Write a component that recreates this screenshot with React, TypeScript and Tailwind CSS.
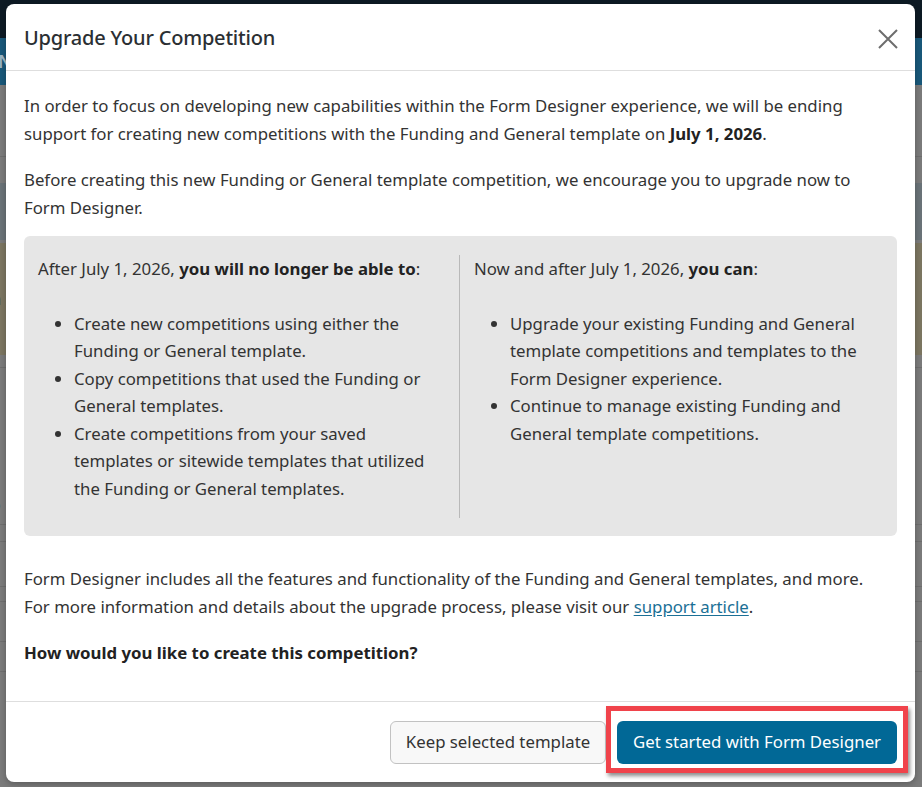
import React from "react";

export default function App() {
  return (
    <div
      className="relative w-[922px] h-[787px] overflow-hidden bg-[#7b7b7b] text-[#333333]"
      style={{ fontFamily: '"Noto Sans", "Open Sans", Arial, sans-serif' }}
    >
      {/* dimmed page underneath */}
      <div className="flex flex-col">
        <div className="h-[38px] bg-[#0d1a24]" />
        <div className="h-[47px] bg-[#19587a] flex items-center">
          <span className="text-[#9fb6c4] text-[17px] font-semibold ml-[-8px]">INS</span>
        </div>
        <div className="h-[72px] border-b border-[#6e6e6e]" />
        <div className="h-[26px]" />
        <div className="h-[57px] bg-[#6a7378]" />
        <div className="h-[3px]" />
        <div className="h-[112px] bg-[#7c7661] flex items-center">
          <span className="text-[#4a4535] text-[17px] ml-[-8px]">a</span>
        </div>
        <div className="h-[13px] border-b border-[#6e6e6e]" />
        <div className="h-[90px]" />
        <div className="h-[20px] flex items-center">
          <span className="text-[#1c1c1c] text-[17px] font-bold ml-[-10px]">r</span>
        </div>
        <div className="h-[17px]" />
        <div className="h-[20px] flex items-center">
          <span className="text-[#1c1c1c] text-[17px] font-bold ml-[-10px]">o</span>
        </div>
        <div className="h-[10px] border-b border-[#6e6e6e]" />
        <div className="h-[17px] border-b border-[#6e6e6e]" />
        <div className="h-[45px] border-b border-[#6e6e6e]" />
        <div className="h-[15px] border-b border-[#6e6e6e]" />
        <div className="h-[40px] border-b border-[#6e6e6e]" />
        <div className="h-[30px] border-b border-[#6e6e6e]" />
      </div>

      {/* modal */}
      <div className="absolute left-[6px] top-[4px] w-[909px] h-[778px] bg-white rounded-[8px] shadow-[0_2px_6px_rgba(0,0,0,0.25)] flex flex-col">
        <div className="h-[67px] flex items-center justify-between pl-[18px] pr-[16px] border-b border-[#dedede] shrink-0">
          <h2 className="text-[20px] font-medium text-[#2b2f33] tracking-[-0.2px] mt-[1px]">
            Upgrade Your Competition
          </h2>
          <svg width="22" height="22" viewBox="0 0 22 22" className="mt-[3px]">
            <path d="M2 2 L20 20 M20 2 L2 20" stroke="#6d6d6d" strokeWidth="2" fill="none" />
          </svg>
        </div>

        <div className="flex-1 pl-[18px] pr-[18px] pt-[21px] text-[16.8px] leading-[27.5px]">
          <p className="whitespace-nowrap">
            In order to focus on developing new capabilities within the Form Designer experience, we will be ending
            <br />
            support for creating new competitions with the Funding and General template on{" "}
            <b className="font-bold text-[#222]">July 1, 2026</b>.
          </p>
          <p className="mt-[19px] whitespace-nowrap">
            Before creating this new Funding or General template competition, we encourage you to upgrade now to
            <br />
            Form Designer.
          </p>

          <div className="mt-[15px] h-[300px] bg-[#e6e6e6] rounded-[6px] flex pt-[19px] pb-[18px]">
            <div className="w-[436px] pl-[14px] border-r border-[#b9b9b9]">
              <p className="whitespace-nowrap">
                After July 1, 2026, <b className="font-bold text-[#222]">you will no longer be able to</b>:
              </p>
              <ul className="mt-[27px] pl-[36px] list-disc whitespace-nowrap">
                <li>
                  Create new competitions using either the
                  <br />
                  Funding or General template.
                </li>
                <li>
                  Copy competitions that used the Funding or
                  <br />
                  General templates.
                </li>
                <li>
                  Create competitions from your saved
                  <br />
                  templates or sitewide templates that utilized
                  <br />
                  the Funding or General templates.
                </li>
              </ul>
            </div>
            <div className="flex-1 pl-[14px]">
              <p className="whitespace-nowrap">
                Now and after July 1, 2026, <b className="font-bold text-[#222]">you can</b>:
              </p>
              <ul className="mt-[27px] pl-[36px] list-disc whitespace-nowrap">
                <li>
                  Upgrade your existing Funding and General
                  <br />
                  template competitions and templates to the
                  <br />
                  Form Designer experience.
                </li>
                <li>
                  Continue to manage existing Funding and
                  <br />
                  General template competitions.
                </li>
              </ul>
            </div>
          </div>

          <p className="mt-[29px] whitespace-nowrap">
            Form Designer includes all the features and functionality of the Funding and General templates, and more.
            <br />
            For more information and details about the upgrade process, please visit our{" "}
            <a className="text-[#1b7096] underline underline-offset-2">support article</a>.
          </p>
          <p className="mt-[19px] font-bold text-[#222] whitespace-nowrap">
            How would you like to create this competition?
          </p>
        </div>

        <div className="h-[81px] border-t border-[#dedede] flex items-center justify-end pr-[18px] gap-[11px] shrink-0">
          <button className="h-[43px] w-[216px] rounded-[6px] border border-[#c2c2c2] bg-[#f8f8f8] text-[16.8px] text-[#333]">
            Keep selected template
          </button>
          <div className="relative">
            <div className="absolute left-[-11px] top-[-15px] right-[-11px] bottom-[-9px] border-[5px] border-[#f0434b] shadow-[2px_3px_4px_rgba(0,0,0,0.45)]" />
            <button className="relative h-[43px] w-[280px] rounded-[6px] bg-[#016896] text-white text-[16.8px]">
              Get started with Form Designer
            </button>
          </div>
        </div>
      </div>
    </div>
  );
}
